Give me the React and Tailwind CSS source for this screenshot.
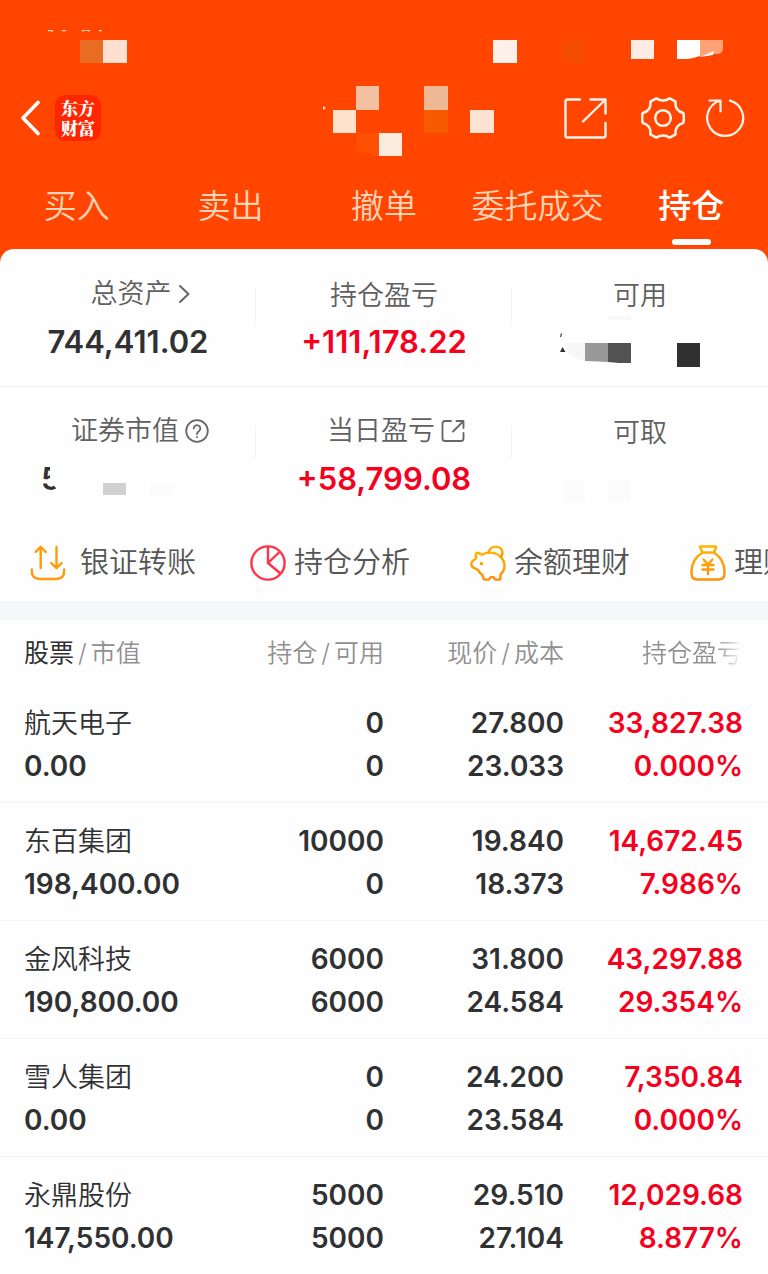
import React from 'react';
import clsx from 'clsx';

const tabs = ['买入', '卖出', '撤单', '委托成交', '持仓'];

const holdings = [
  { name: '航天电子', value: '0.00', held: '0', usable: '0', price: '27.800', cost: '23.033', profit: '33,827.38', rate: '0.000%' },
  { name: '东百集团', value: '198,400.00', held: '10000', usable: '0', price: '19.840', cost: '18.373', profit: '14,672.45', rate: '7.986%' },
  { name: '金风科技', value: '190,800.00', held: '6000', usable: '6000', price: '31.800', cost: '24.584', profit: '43,297.88', rate: '29.354%' },
  { name: '雪人集团', value: '0.00', held: '0', usable: '0', price: '24.200', cost: '23.584', profit: '7,350.84', rate: '0.000%' },
  { name: '永鼎股份', value: '147,550.00', held: '5000', usable: '5000', price: '29.510', cost: '27.104', profit: '12,029.68', rate: '8.877%' },
];

function TransferIcon() {
  return (
    <svg viewBox="0 0 36 36" className="w-9 h-9 shrink-0" fill="none" stroke="#ff9a0a" strokeWidth="2.4" strokeLinecap="round" strokeLinejoin="round">
      <path d="M10.7 23V2M5.5 7l5.2-5.2L15.9 7M26.5 2v21M21.3 18l5.2 5.2 5.2-5.2" />
      <path d="M1.8 24.5v1.5q0 8 8 8h16.4q8 0 8-8v-1.5" />
    </svg>
  );
}

function PieIcon() {
  return (
    <svg viewBox="0 0 36 36" className="w-9 h-9 shrink-0" fill="none" stroke="#ff3347" strokeWidth="2.4" strokeLinejoin="round">
      <circle cx="18" cy="18" r="16.6" />
      <path d="M18 1.5V18l12.5 10.5M18 18L29.5 7" />
    </svg>
  );
}

function PiggyIcon() {
  return (
    <svg viewBox="0 0 36 36" className="w-9 h-9 shrink-0" fill="none" stroke="url(#piggy)" strokeWidth="2.4" strokeLinecap="round" strokeLinejoin="round">
      <defs>
        <linearGradient id="piggy" x1="0" y1="1" x2="0" y2="0">
          <stop offset="0" stopColor="#ff8c0a" />
          <stop offset="1" stopColor="#ffb400" />
        </linearGradient>
      </defs>
      <path d="M6.5 7.800q3 0 5.500 2Q15.500 7.600 20 7.600q6.500 0 10.500 4t4 9.500q0 4.900-4 8.400v3.200q0 1.900-1.700 1.900h-2.800q-1.400 0-1.700-1.300l-.4-1.200h-3.400l-.5 1.200q-.5 1.300-1.800 1.300h-3q-1.500 0-2-1.700l-.8-3q-2.700-1.700-4.300-4.800l-4.200-2.300Q1.400 21.800 1.400 19.500v-1.200q0-1.800 2.400-3.200l2.600-2q-1.400-3 .1-5.300Z" />
      <path d="M18.500 7.400q1.500-5.800 7.500-5.800 3.300 0 5.200 2.400 2.700 3.700-.4 8" />
      <circle cx="11.500" cy="18.500" r="1.100" fill="#ff9a0a" strokeWidth="1.200" />
    </svg>
  );
}

function MoneyBagIcon() {
  return (
    <svg viewBox="0 0 36 36" className="w-9 h-9 shrink-0" fill="none" stroke="url(#bag)" strokeWidth="2.4" strokeLinecap="round" strokeLinejoin="round">
      <defs>
        <linearGradient id="bag" gradientUnits="userSpaceOnUse" x1="0" y1="36" x2="0" y2="0">
          <stop offset="0" stopColor="#ff8c0a" />
          <stop offset="1" stopColor="#ffb400" />
        </linearGradient>
      </defs>
      <path d="M10.5 1.5h15q1 0 .5 1L24 7.500H12.500l-2.400-5q-.5-1 .4-1Z" />
      <path d="M12.500 7.500Q1.500 14.500 1.500 27v1.500q0 6 6 6h21q6 0 6-6V27Q34.500 14.500 24 7.500" />
      <path d="M13.500 14.500l4.500 5 4.500-5M12.500 20h11M12.500 24.500h11M18 20v9" />
    </svg>
  );
}

const actions = [
  { label: '银证转账', Icon: TransferIcon, gap: 'gap-3.5' },
  { label: '持仓分析', Icon: PieIcon, gap: 'gap-2' },
  { label: '余额理财', Icon: PiggyIcon, gap: 'gap-2' },
  { label: '理财', Icon: MoneyBagIcon, gap: 'gap-2' },
];

function Stat({ label, icon, children, red, divider }) {
  return (
    <div className="relative flex flex-col items-center gap-2 pt-7 pb-6">
      {divider && <span className="absolute right-0 top-[38px] h-[34px] w-px bg-[#f3f3f3]" />}
      <div className={clsx('flex h-9 items-center gap-1.5 text-[27px] leading-8 font-[350] text-[#606060]', icon && 'pb-1 pl-6')}>
        {label}
        {icon}
      </div>
      <div className={clsx('flex h-10 items-center text-[31px] font-semibold', red ? 'text-[#f5001d]' : 'text-[#303133]')}>
        {children}
      </div>
    </div>
  );
}

function Header() {
  return (
    <header className="bg-[#ff4500] text-white">
      {/* Status bar */}
      <div className="flex h-[79px] justify-between pt-[30px] pl-12 pr-[45px]" aria-hidden="true">
        <svg width="79" height="34" viewBox="48 30 79 34">
          <path d="M48 31q2-2 5 .5M62 31q2-1.500 4 0M82 31q4-2 8 0M99 31l3-1" stroke="#ffd9c4" strokeWidth="1.500" fill="none" />
          <rect x="80" y="40" width="23" height="23" fill="#e96c24" />
          <rect x="103" y="40" width="24" height="23" fill="#fde0d0" />
        </svg>
        <svg width="230" height="34" viewBox="493 30 230 34">
          <rect x="493" y="40" width="24" height="23" fill="#fff0ea" />
          <rect x="562" y="40" width="23" height="23" fill="#f54c00" />
          <rect x="631" y="40" width="23" height="19" fill="#ffece4" />
          <path d="M677 40h23v16q-6 2-12 3h-11Z" fill="#fff" />
          <path d="M700 40h23v8q0 6-6 6h-4l-13 3Z" fill="#ffa377" />
          <path d="M700 57l14-6-1 4Z" fill="#fff" />
        </svg>
      </div>

      {/* Nav bar */}
      <div className="flex h-[78px] items-center pl-5 pr-[22px]">
        <button type="button" aria-label="返回">
          <svg width="21" height="36" viewBox="0 0 21 36" fill="none" stroke="#fff" strokeWidth="3.600" strokeLinecap="round" strokeLinejoin="round">
            <path d="M18 2.500L3 18l15 15.500" />
          </svg>
        </button>
        <div className="ml-3.5 flex size-[46px] items-center justify-center rounded-[10px] bg-[#ff2600] text-center font-['Noto_Serif_CJK_SC','Noto_Sans_CJK_SC',serif] text-[17px] font-black leading-5">
          <p>
            东方
            <br />
            财富
          </p>
        </div>
        <svg width="172" height="78" viewBox="322 79 172 78" className="ml-auto mr-[69px]" aria-hidden="true">
          <path d="M323 106l3 2-3 2Z" fill="#ffe4cc" />
          <rect x="356" y="86" width="23" height="24" fill="#f3c0a0" />
          <rect x="333" y="110" width="23" height="23" fill="#fde3cc" />
          <path d="M356 133h23v23q-12-1-23-6Z" fill="#ff4f00" />
          <rect x="379" y="133" width="23" height="23" fill="#fbecde" />
          <rect x="424" y="86" width="24" height="24" fill="#efb894" />
          <rect x="424" y="110" width="24" height="23" fill="#f75b00" />
          <rect x="470" y="110" width="24" height="23" fill="#fde3d3" />
        </svg>
        <div className="flex items-center">
          <button type="button" aria-label="分享">
            <svg width="44" height="44" viewBox="0 0 44 44" fill="none" stroke="#fff5ec" strokeWidth="2.400" strokeLinecap="round" strokeLinejoin="round">
              <path d="M17 3.500H4.500Q2.500 3.500 2.500 5.500v34q0 2 2 2H40.500q2 0 2-2V27M27.500 3.500h15v14M42 4L20 25.500" />
            </svg>
          </button>
          <button type="button" aria-label="设置" className="ml-[34px]">
            <svg width="44" height="44" viewBox="0 0 44 44" fill="none" stroke="#fff5ec" strokeWidth="2.500" strokeLinejoin="round">
              <path d="M15.300 2.400Q18.500 4.600 22 4.600T28.700 2.400L34.600 5.600Q34 10 36 13T42.300 17Q43.400 22 42.300 27 38 28 36 31T34.600 38.400L28.700 41.600Q25.500 39.400 22 39.400T15.300 41.600L9.400 38.400Q10 34 8 31T1.700 27Q.6 22 1.700 17 6 16 8 13T9.400 5.600Z" />
              <circle cx="22" cy="22" r="7.800" />
            </svg>
          </button>
          <button type="button" aria-label="刷新" className="ml-[21px]">
            <svg width="40" height="44" viewBox="0 0 40 44" fill="none" stroke="#fff5ec" strokeWidth="2.200" strokeLinecap="round" strokeLinejoin="round">
              <path d="M24 4.600A18 18 0 1 1 14 4.700M3.500 4.500h11v11" />
            </svg>
          </button>
        </div>
      </div>

      {/* Tabs */}
      <nav className="grid grid-cols-5 pt-[25px] pb-1 text-[33px] leading-[48px]">
        {tabs.map((tab) => (
          <button
            key={tab}
            type="button"
            className={clsx(
              'flex flex-col items-center gap-[9px] whitespace-nowrap',
              tab === '持仓' ? 'font-medium text-white' : 'font-[350] text-[#ffd3b5]'
            )}
          >
            {tab}
            {tab === '持仓' && <span className="h-1.5 w-[39px] rounded-full bg-white" />}
          </button>
        ))}
      </nav>
    </header>
  );
}

function Summary() {
  return (
    <section>
      <div className="grid grid-cols-3 border-b border-[#f0f0f0] pt-px">
        <Stat
          label="总资产"
          divider
          icon={
            <svg width="12" height="20" viewBox="0 0 12 20" fill="none" stroke="#666" strokeWidth="2" strokeLinecap="round" strokeLinejoin="round">
              <path d="M2 2l8.500 8L2 18" />
            </svg>
          }
        >
          744,411.02
        </Stat>
        <Stat label="持仓盈亏" red divider>+111,178.22</Stat>
        <Stat label="可用">
          <svg width="164" height="52" viewBox="558 316 164 52" className="shrink-0" aria-hidden="true">
            <rect x="608" y="316" width="23" height="4" fill="#f8f8f8" />
            <path d="M561 333l1 1-1 3h-1ZM560 352l2.500-5 3 5Z" fill="#303133" />
            <path d="M565 343h20v18q-14-2-20-13Z" fill="#f7f7f7" />
            <path d="M585 343h23v19l-23-1Z" fill="#999" />
            <path d="M608 343h23v20h-12l-11-1Z" fill="#525252" />
            <rect x="677" y="343" width="23" height="24" fill="#303030" />
          </svg>
        </Stat>
      </div>
      <div className="grid grid-cols-3">
        <Stat
          label="证券市值"
          divider
          icon={
            <svg width="24" height="24" viewBox="0 0 24 24" fill="none" stroke="#666" strokeWidth="1.800" strokeLinecap="round">
              <circle cx="12" cy="12" r="10.800" />
              <path d="M8.700 9.500a3.300 3.300 0 1 1 5.300 2.600q-2 1.400-2 3M12 18v.2" />
            </svg>
          }
        >
          <svg width="174" height="40" viewBox="41 459 174 40" aria-hidden="true">
            <clipPath id="edge">
              <path d="M41 459h9v20h-2l8 9v10H41Z" />
            </clipPath>
            <text x="41" y="490" fontSize="31" fill="#303133" clipPath="url(#edge)">5</text>
            <rect x="103" y="483" width="23" height="12" fill="#d0d0d0" />
            <rect x="150" y="484" width="22" height="12" fill="#fbfbfb" />
          </svg>
        </Stat>
        <Stat
          label="当日盈亏"
          red
          divider
          icon={
            <svg width="24" height="24" viewBox="0 0 24 24" fill="none" stroke="#666" strokeWidth="1.800" strokeLinecap="round" strokeLinejoin="round">
              <path d="M10 2H4Q1.500 2 1.500 4.500v15Q1.500 22 4 22h16q2.500 0 2.500-2.500V14M15.500 2h7v7M22.500 2L12 12.500" />
            </svg>
          }
        >
          +58,799.08
        </Stat>
        <Stat label="可取">
          <svg width="152" height="50" viewBox="564 459 152 50" className="shrink-0" aria-hidden="true">
            <rect x="564" y="484" width="21" height="23" fill="#fbfbfb" />
            <rect x="608" y="484" width="22" height="23" fill="#fbfbfb" />
          </svg>
        </Stat>
      </div>
    </section>
  );
}

function HoldingsTable() {
  return (
    <table className="w-full table-fixed text-right text-[28px] leading-[43px]">
      <colgroup>
        <col />
        <col className="w-[183px]" />
        <col className="w-[180px]" />
        <col className="w-[204px]" />
      </colgroup>
      <thead>
        <tr className="h-16 text-[25px] text-[#909090]">
          <th className="pt-0.5 pl-6 text-left font-[350]">
            <span className="font-normal text-[#303133]">股票</span>
            <span className="px-1">/</span>市值
          </th>
          <th className="pt-0.5 font-[350]">持仓<span className="px-1">/</span>可用</th>
          <th className="pt-0.5 font-[350]">现价<span className="px-1">/</span>成本</th>
          <th className="pt-0.5 pr-[26px] font-[350]">
            <span className="bg-linear-to-r from-[#909090] from-75% to-[#90909000] bg-clip-text text-transparent">持仓盈亏</span>
          </th>
        </tr>
      </thead>
      <tbody>
        {holdings.map((item) => (
          <tr key={item.name} className="h-[118px] border-b border-[#f3f3f3] font-semibold text-[#303133] last:border-b-0">
            <td className="pl-6 pt-1 text-left">
              <div className="text-[27px] font-[350]">{item.name}</div>
              <div>{item.value}</div>
            </td>
            <td className="pt-1">
              <div>{item.held}</div>
              <div>{item.usable}</div>
            </td>
            <td className="pt-1">
              <div>{item.price}</div>
              <div>{item.cost}</div>
            </td>
            <td className="pt-1 pr-[25px] text-[#f5001d]">
              <div>{item.profit}</div>
              <div>{item.rate}</div>
            </td>
          </tr>
        ))}
      </tbody>
    </table>
  );
}

export default function App() {
  return (
    <div className="bg-[#ff4500] font-['Inter','Noto_Sans_CJK_SC',sans-serif]">
      <Header />
      <main className="overflow-hidden rounded-t-[14px] bg-[#fefefe]">
        <Summary />

        {/* Shortcuts */}
        <div className="flex h-[78px] items-center overflow-hidden pt-0.5 pl-[30px]">
          {actions.map(({ label, Icon, gap }) => (
            <button
              key={label}
              type="button"
              className={clsx('flex w-[220px] shrink-0 items-center whitespace-nowrap text-[29px] leading-9 font-[350] text-[#555]', gap)}
            >
              <Icon />
              {label}
            </button>
          ))}
        </div>

        <div className="h-[19px] bg-[#f5f7fa]" />
        <HoldingsTable />
      </main>
    </div>
  );
}
